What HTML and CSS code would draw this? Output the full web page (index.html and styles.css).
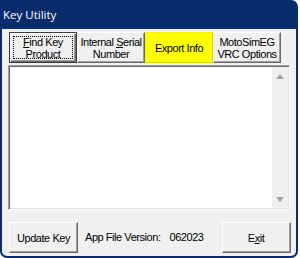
FILE: index.html
```html
<!doctype html>
<html>
<head>
<meta charset="utf-8">
<title>Key Utility</title>
<link rel="stylesheet" href="styles.css">
</head>
<body>
	<div class="window">
		<div class="titlebar">
			<span class="title">Key Utility</span>
		</div>
		<div class="client">
			<div class="tabs">
				<div class="btn btn-default"><div class="focus"><span><u>F</u>ind Key<br>Product</span></div></div>
				<div class="btn"><span>Internal <u>S</u>erial<br>Number</span></div>
				<div class="btn btn-yellow"><span>Export Info</span></div>
				<div class="btn"><span>MotoSimEG<br>VRC Options</span></div>
			</div>
			<div class="memo">
				<div class="memo-text"></div>
				<div class="scrollbar">
					<span class="arrow up"></span>
					<span class="arrow down"></span>
				</div>
			</div>
			<div class="footer">
				<div class="btn btn-update"><span>Update Key</span></div>
				<span class="label">App File Version:</span>
				<span class="value">062023</span>
				<div class="btn btn-exit"><span>E<u>x</u>it</span></div>
			</div>
		</div>
	</div>
</body>
</html>
```

FILE: styles.css
```css
*{
	margin: 0;
	padding: 0;
	box-sizing: border-box;
}
body{
	background: #fff;
	font-family: "Liberation Sans", Arial, sans-serif;
	font-size: 11px;
	letter-spacing: -0.45px;
	color: #000;
}
.window{
	width: 298px;
	height: 258px;
	background: #0b2c6c;
	border-radius: 0 7px 7px 7px;
	padding: 0 2px 2px 2px;
	overflow: hidden;
}
.titlebar{
	height: 29px;
	display: flex;
	align-items: center;
	padding-left: 1px;
	padding-bottom: 1px;
}
.title{
	font-family: "Open Sans", "Noto Sans", sans-serif;
	font-size: 11.5px;
	letter-spacing: 0;
	color: #fff;
}
.client{
	height: 227px;
	background: #f0f0f0;
	border-radius: 0 0 5px 5px;
	padding-top: 3px;
}
.tabs{
	display: flex;
	margin-left: 7px;
	height: 31px;
}
.btn{
	width: 68px;
	height: 31px;
	display: flex;
	align-items: center;
	justify-content: center;
	text-align: center;
	line-height: 12px;
	background: #f0f0f0;
	border-top: 1px solid #fff;
	border-left: 1px solid #fff;
	border-right: 1px solid #696969;
	border-bottom: 1px solid #696969;
	box-shadow: inset -1px -1px 0 #a0a0a0;
}
.btn-default{
	border: 1px solid #3a3a3a;
	box-shadow: inset 1px 1px 0 #fff, inset -1px -1px 0 #696969, inset -2px -2px 0 #a0a0a0;
}
.focus{
	display: flex;
	align-items: center;
	justify-content: center;
	width: 60px;
	height: 23px;
	border: 1px dotted #000;
	padding-top: 1px;
}
.btn-yellow{
	background: #ffff00;
	border-color: #f4f400;
	border-right-color: #d6d600;
	border-bottom-color: #d6d600;
	box-shadow: none;
}
.memo{
	display: flex;
	margin: 2px 0 0 6px;
	width: 282px;
	height: 145px;
	border-top: 1px solid #a0a0a0;
	border-left: 1px solid #a0a0a0;
	border-right: 1px solid #fff;
	border-bottom: 1px solid #fff;
	box-shadow: inset 1px 1px 0 #696969, inset -1px -1px 0 #e3e3e3;
	padding: 1px;
}
.memo-text{
	flex: 1;
	background: #fff;
}
.scrollbar{
	width: 16px;
	background: #f0f0f0;
	display: flex;
	flex-direction: column;
	justify-content: space-between;
	align-items: center;
	padding: 7px 0 6px;
}
.arrow{
	width: 0;
	height: 0;
	border-left: 4px solid transparent;
	border-right: 4px solid transparent;
}
.arrow.up{
	border-bottom: 5px solid #a3a3a3;
}
.arrow.down{
	border-top: 5px solid #a3a3a3;
}
.footer{
	display: flex;
	align-items: center;
	margin: 12px 0 0 7px;
	height: 31px;
}
.btn-update{
	width: 69px;
}
.label{
	margin-left: 7px;
	padding-bottom: 2px;
}
.value{
	margin-left: 9px;
	padding-bottom: 2px;
}
.btn-exit{
	width: 69px;
	margin-left: 18px;
}
```
